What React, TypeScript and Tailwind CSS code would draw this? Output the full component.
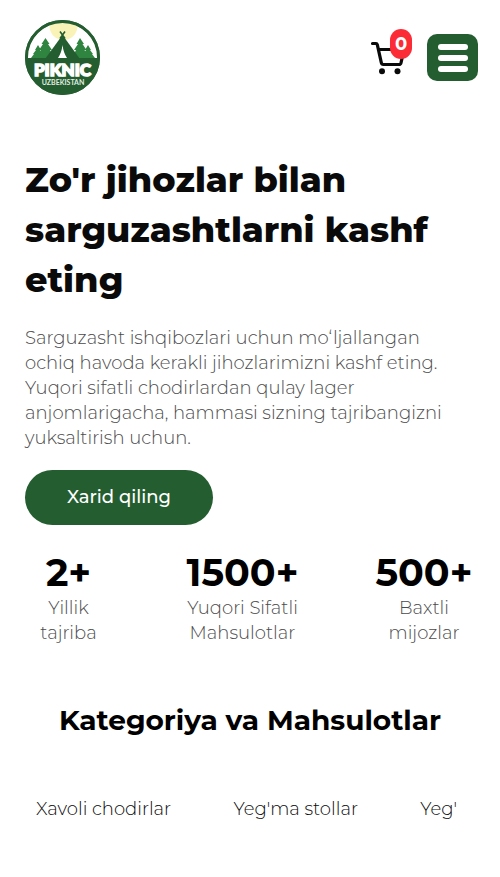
import React from "react";

const stats = [
  { value: "2+", label: "Yillik tajriba" },
  { value: "1500+", label: "Yuqori Sifatli Mahsulotlar" },
  { value: "500+", label: "Baxtli mijozlar" },
];

function Logo() {
  return (
    <svg viewBox="0 0 75 75" className="size-[75px]" role="img" aria-label="Piknic Uzbekistan">
      <defs>
        <clipPath id="badge">
          <circle cx="37.5" cy="37.5" r="35" />
        </clipPath>
      </defs>
      <circle cx="37.5" cy="37.5" r="37.5" fill="#245e30" />
      <g clipPath="url(#badge)">
        <rect width="75" height="38" fill="#fff" />
        <circle cx="38.5" cy="6" r="14" fill="#faf3b8" />
        <g fill="#2f8540">
          <path d="M13 25l3 5h-1l3 4h-1l3 4H6l3-4H8l3-4h-1z" />
          <path d="M20.500 18l4 6h-1.500l4 6h-2l4 8H12l4-8h-2l4-6h-1.500z" />
          <path d="M55 18l4 6h-1.500l4 6h-2l4 8H47l4-8h-2l4-6h-1.500z" />
          <path d="M63 25l3 5h-1l3 4h-1l3 4H56l3-4h-1l3-4h-1z" />
        </g>
        <path d="M37.500 15L55 39H20z" fill="#245e30" />
        <path d="M35 11.500l5 7M40 11.500l-5 7" stroke="#245e30" strokeWidth="1.600" />
        <path d="M37.500 25q1 8 4.500 13h-9q3.500-5 4.500-13z" fill="#fff" />
        <rect y="38" width="75" height="37" fill="#245e30" />
      </g>
      <circle cx="37.5" cy="37.5" r="36" fill="none" stroke="#245e30" strokeWidth="3" />
      <text x="37.5" y="55.5" textAnchor="middle" fill="#fff" stroke="#fff" strokeWidth="1.600" className="font-[Lato] text-[17px] font-black">
        PIKNIC
      </text>
      <text x="38" y="65" textAnchor="middle" fill="#e2ede4" className="font-[Lato] text-[7px] font-bold">
        UZBEKISTAN
      </text>
    </svg>
  );
}

function CartIcon() {
  return (
    <svg viewBox="0 0 36 36" className="size-9" fill="none" stroke="#0a0a0a" strokeWidth="3.200" strokeLinecap="round" strokeLinejoin="round" aria-hidden="true">
      <path d="M2.500 3.500H6q1 0 1.300 1.200l4 18q.4 1.800 2 1.800H29q1.600 0 2-1.600L34 9.500H8.500" />
      <circle cx="12" cy="31.200" r="3" fill="#0a0a0a" stroke="none" />
      <circle cx="27.500" cy="31.200" r="3" fill="#0a0a0a" stroke="none" />
    </svg>
  );
}

export default function App() {
  return (
    <div className="min-h-screen overflow-hidden bg-white pb-12 font-['Montserrat','Inter',sans-serif] text-black">
      <header className="flex items-center justify-between pt-5 pr-[22px] pl-[25px]">
        <a href="#home">
          <Logo />
        </a>
        <div className="flex items-center gap-[21px]">
          <button type="button" aria-label="Savat" className="relative">
            <CartIcon />
            <span className="absolute -top-[11px] -right-1.5 flex h-[30px] w-[22px] items-center justify-center rounded-full bg-[#fb2c36] text-lg font-bold text-white">
              0
            </span>
          </button>
          <button type="button" aria-label="Menyu" className="flex h-[47px] w-[51px] flex-col items-center justify-center gap-[5px] rounded-[10px] bg-[#245e30]">
            <span className="h-[6px] w-[30px] rounded-full bg-white" />
            <span className="h-[6px] w-[30px] rounded-full bg-white" />
            <span className="h-[6px] w-[30px] rounded-full bg-white" />
          </button>
        </div>
      </header>

      <main className="px-[25px]">
        <section className="pt-[60px]">
          <h1 className="text-[35px] leading-[50px] font-extrabold text-[#0a0a0a]">
            Zo'r jihozlar bilan sarguzashtlarni kashf eting
          </h1>
          <p className="mt-[21px] max-w-[425px] text-[18px] leading-[25px] font-light text-[#4b4b4b]">
            Sarguzasht ishqibozlari uchun moʻljallangan ochiq havoda kerakli jihozlarimizni kashf eting.
            Yuqori sifatli chodirlardan qulay lager anjomlarigacha, hammasi sizning tajribangizni
            yuksaltirish uchun.
          </p>
          <button type="button" className="mt-[19px] flex h-[55px] w-[188px] items-center justify-center rounded-full bg-[#245e30] text-[18px] font-medium text-white">
            Xarid qiling
          </button>
          <dl className="mt-[25px] grid grid-cols-[87px_1fr_102px] text-center">
            {stats.map((s) => (
              <div key={s.value} className="flex flex-col-reverse items-center">
                <dt className="max-w-[150px] text-[18px] leading-[25px] font-light text-[#4b4b4b]">{s.label}</dt>
                <dd className="text-[38px] leading-[46px] font-bold">{s.value}</dd>
              </div>
            ))}
          </dl>
        </section>

        <section className="pt-[54px]">
          <h2 className="text-center text-[28px] leading-10 font-bold">Kategoriya va Mahsulotlar</h2>
          <nav className="mt-[57px] flex items-center justify-between pr-[18px] pl-[11px] text-[18px] leading-[25px] font-light whitespace-nowrap text-[#0a0a0a]">
            <button type="button">Xavoli chodirlar</button>
            <button type="button">Yeg'ma stollar</button>
            <button type="button">Yeg'</button>
          </nav>
        </section>
      </main>
    </div>
  );
}
